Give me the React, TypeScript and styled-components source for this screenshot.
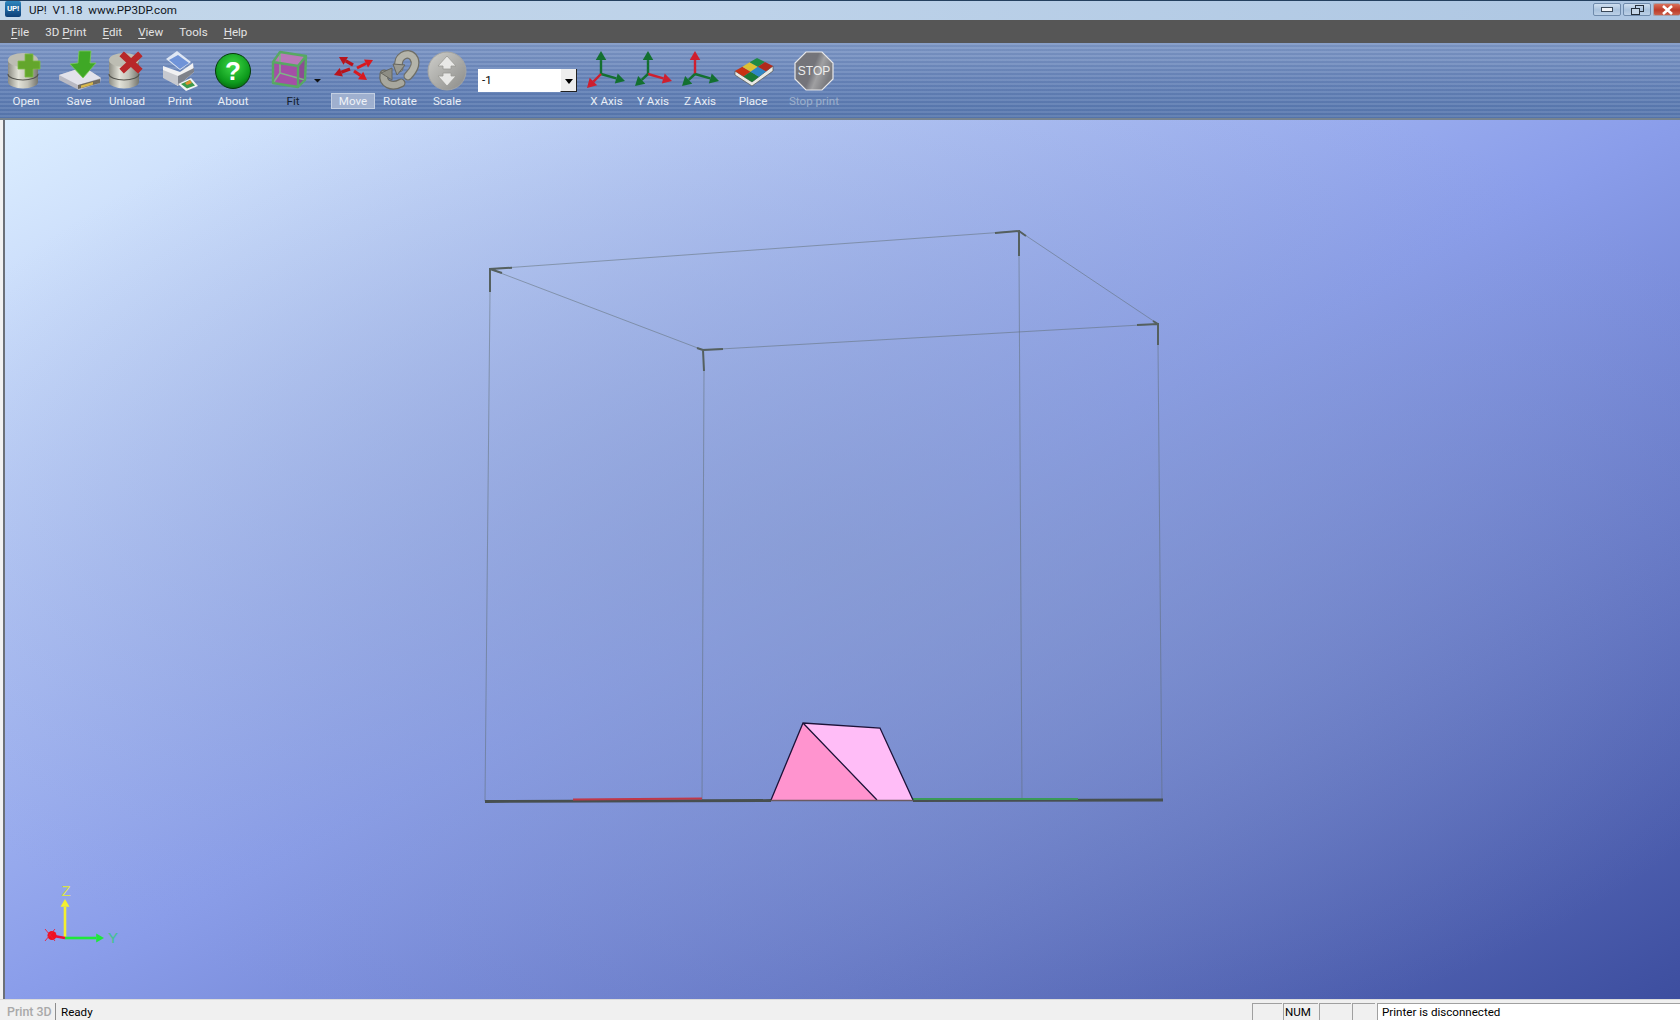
import React from "react";
import styled, { createGlobalStyle } from "styled-components";

const Global = createGlobalStyle`
  html, body { margin: 0; padding: 0; height: 100%; overflow: hidden; background: #f0f0f0; }
  #root { height: 100%; }
`;

const Shell = styled.div`
  display: flex; flex-direction: column; width: 1680px; height: 1020px; overflow: hidden;
  font-family: Roboto, "Liberation Sans", sans-serif; font-size: 11.6px;
`;
const TitleBar = styled.div`
  display: flex; align-items: flex-start; height: 20px; flex: none; box-sizing: border-box;
  border-top: 1px solid #24405f;
  background: linear-gradient(90deg, #c3d7ea 0%, #bdd2e9 45%, #adc6e2 100%);
`;
const AppBadge = styled.div`
  width: 16px; height: 16px; margin: 0 0 0 5px; display: flex; align-items: center; justify-content: center;
  background: linear-gradient(#2f86bd, #0d3f78); border-radius: 2px;
  color: #fff; font-size: 8px; font-weight: 700; line-height: 16px; letter-spacing: -.2px;
`;
const TitleText = styled.div`
  margin-left: 8px; color: #10151c; line-height: 18px; white-space: pre;
`;
const WindowButtons = styled.div`
  margin-left: auto; display: flex; gap: 2px; padding-top: 2px;
`;
const WinBtn = styled.div<{ $w: number; $close?: boolean }>`
  width: ${(p) => p.$w}px; height: 13px; box-sizing: border-box; display: flex; align-items: center; justify-content: center;
  border: 1px solid ${(p) => (p.$close ? "#a8a0a8" : "#6f8bac")}; border-radius: 2px;
  border-right-width: ${(p) => (p.$close ? 0 : 1)}px;
  background: ${(p) =>
    p.$close ? "linear-gradient(#d9705a, #bd3b28 55%, #c9604c)" : "linear-gradient(#cfdff0, #a9c2dd 55%, #bcd0e6)"};
`;
const MenuBar = styled.div`
  display: flex; gap: 16px; height: 23px; flex: none; box-sizing: border-box; padding: 0 0 0 11px;
  align-items: center; background: #565656; color: #e4e4e4;
`;
const MenuItem = styled.span`
  line-height: 20px;
  u { text-underline-offset: 2px; }
`;
const Toolbar = styled.div`
  display: flex; align-items: flex-start; height: 77px; flex: none; box-sizing: border-box; padding-top: 2px;
  border-bottom: 2px solid #76838f;
  background:
    repeating-linear-gradient(180deg, rgba(255,255,255,.08) 0 2px, rgba(20,40,90,.06) 2px 4px),
    linear-gradient(#7f98c6, #6683b8 55%, #5878ae);
`;
const ToolItem = styled.div<{ $w: number }>`
  width: ${(p) => p.$w}px; flex: none; display: flex; flex-direction: column; align-items: center;
`;
const ToolIcon = styled.svg`
  display: block; flex: none; height: 48px;
`;
const ToolLabel = styled.div<{ $tone?: "dark" | "off"; $active?: boolean }>`
  height: 16px; line-height: 17px; white-space: nowrap; box-sizing: border-box; text-align: center;
  color: ${(p) => (p.$tone === "dark" ? "#14202e" : p.$tone === "off" ? "#9db0cc" : "#e8eef6")};
  ${(p) =>
    p.$active
      ? `width: 44px; line-height: 15px; background: #9fb0cf; border: 1px solid #c3cfe2; color: #eef2f8;`
      : ""}
`;
const Combo = styled.div`
  width: 99px; height: 23px; margin: 24px 0 0 10px; flex: none; box-sizing: border-box; display: flex;
  background: #fff; color: #000; line-height: 23px; padding-left: 4px; justify-content: space-between;
`;
const ComboBtn = styled.div`
  width: 17px; height: 23px; box-sizing: border-box; display: flex; align-items: center; justify-content: center;
  background: #ededed; border-left: 1px solid #fff; border-right: 1px solid #222; border-bottom: 1px solid #222;
  &::after { content: ""; margin-top: 3px; border: 4px solid transparent; border-top: 5px solid #000; border-bottom: 0; }
`;
const Main = styled.div`
  flex: 1; display: flex; min-height: 0;
`;
const SideEdge = styled.div`
  width: 5px; flex: none; box-sizing: border-box; background: #f2f2f2; border-right: 2px solid #6b7078;
`;
const Viewport = styled.div`
  flex: 1; min-width: 0;
  background:
    radial-gradient(ellipse 60% 60% at 50% 50%, rgba(135,155,200,.6), rgba(135,155,200,0)),
    linear-gradient(to bottom right, #dceeff 0%, #8a9dea 50%, #3d4e9f 100%);
`;
const Scene = styled.svg`
  display: block; width: 100%; height: 100%;
`;
const StatusBar = styled.div`
  height: 21px; flex: none; display: flex; align-items: flex-end; box-sizing: border-box; background: #f0f0f0;
  color: #000; border-top: 1px solid #dcdcdc;
`;
const StatusTab = styled.div`
  width: 53px; margin-left: 3px; height: 17px; box-sizing: border-box; padding-left: 4px; line-height: 18px; flex: none;
  color: #a9a9a9; font-weight: 500; font-size: 12.4px; border-right: 1px solid #8d8d8d; white-space: nowrap;
`;
const StatusText = styled.div`
  margin-left: 5px; line-height: 18px; height: 17px; flex: 1;
`;
const Pane = styled.div<{ $w: number; $main?: boolean }>`
  width: ${(p) => p.$w}px; height: 17px; flex: none; box-sizing: border-box; margin-left: ${(p) => (p.$main ? 2 : 1)}px;
  border-left: 1px solid #a0a0a0; border-top: 1px solid #a0a0a0; padding-left: ${(p) => (p.$main ? 4 : 1)}px;
  line-height: 17px; white-space: nowrap; background: ${(p) => (p.$main ? "#fff" : "#f0f0f0")};
`;

function Arrow({ x1, y1, x2, y2, c, w = 2, h = 6 }: { x1: number; y1: number; x2: number; y2: number; c: string; w?: number; h?: number }) {
  const a = Math.atan2(y2 - y1, x2 - x1);
  const bx = x2 - Math.cos(a) * h * 1.3;
  const by = y2 - Math.sin(a) * h * 1.3;
  const px = -Math.sin(a) * h * 0.75;
  const py = Math.cos(a) * h * 0.75;
  return (
    <g>
      <line x1={x1} y1={y1} x2={bx} y2={by} stroke={c} strokeWidth={w} />
      <polygon points={`${x2},${y2} ${bx + px},${by + py} ${bx - px},${by - py}`} fill={c} />
    </g>
  );
}

function Cyl({ id, cx }: { id: string; cx: number }) {
  const rx = 15;
  return (
    <g>
      <defs>
        <linearGradient id={id} x1="0" x2="1" y1="0" y2="0">
          <stop offset="0" stopColor="#8d8d84" />
          <stop offset=".35" stopColor="#e2e2d8" />
          <stop offset=".65" stopColor="#c3c3b9" />
          <stop offset="1" stopColor="#76766e" />
        </linearGradient>
      </defs>
      <path d={`M${cx - rx} 60 V82 A${rx} 6.5 0 0 0 ${cx + rx} 82 V60 Z`} fill={`url(#${id})`} />
      <ellipse cx={cx} cy={60} rx={rx} ry={7} fill="#bdbdb3" />
      <path d={`M${cx - rx} 74 A${rx} 6 0 0 0 ${cx + rx} 74`} fill="none" stroke="#55554f" strokeWidth="1.2" />
    </g>
  );
}

const Open = () => (
  <ToolIcon viewBox="2 45 48 48" width="48">
    <Cyl id="c1" cx={23} />
    <path d="M25 54h8v7h7v8h-7v8h-8v-8h-7v-8h7z" fill="#63a62c" stroke="#7dbb48" strokeWidth=".8" />
  </ToolIcon>
);
const Save = () => (
  <ToolIcon viewBox="55 45 48 48" width="48">
    <polygon points="59,75 84,67 101,78 100,83 79,90 59,80" fill="#b9b9c2" />
    <polygon points="59,75 84,67 101,78 78,85" fill="#e2e2ea" />
    <polygon points="78,85 100,79 100,83 78,89" fill="#6f6a60" />
    <polygon points="81,85.5 93,82 93,84.5 81,88" fill="#d8b84c" />
    <polygon points="79,51 91,51 90,63 96,63 83,78 70,64 78,63" fill="#3fa826" stroke="#7ccc58" strokeWidth=".8" />
  </ToolIcon>
);
const Unload = () => (
  <ToolIcon viewBox="103 45 48 48" width="48">
    <Cyl id="c2" cx={124} />
    <path d="M124 56 L138 69 M138 56 L124 69" stroke="#b8282a" strokeWidth="6.5" strokeLinecap="square" fill="none" />
  </ToolIcon>
);
const PrintI = () => (
  <ToolIcon viewBox="156 45 48 48" width="48">
    <polygon points="166,59 177,51 191,62 180,70" fill="#dfe7f4" />
    <polygon points="169,60 178,55 189,63 180,69" fill="#6f93d8" />
    <polygon points="163,66 180,72 193,63 194,72 178,86 163,76" fill="#f1f1f3" />
    <polygon points="163,70 178,76 178,86 163,78" fill="#c7c9cf" />
    <polygon points="178,76 194,68 194,72 178,86" fill="#7f828b" />
    <polygon points="178,84 191,78 198,86 186,91" fill="#f3f3f3" />
    <polygon points="181,84 190,80 195,85.500 187,88.500" fill="#3c9a4c" />
    <polygon points="185,83 190,80 192,83 187,85" fill="#e09030" />
  </ToolIcon>
);
const About = () => (
  <ToolIcon viewBox="209 45 48 48" width="48">
    <defs>
      <radialGradient id="ab" cx=".5" cy=".35" r=".7">
        <stop offset="0" stopColor="#3fd848" />
        <stop offset=".7" stopColor="#0d9a1c" />
        <stop offset="1" stopColor="#04600e" />
      </radialGradient>
    </defs>
    <circle cx="233" cy="71" r="17.500" fill="url(#ab)" stroke="#063a0c" strokeWidth="1" />
    <text x="233" y="80" textAnchor="middle" fontSize="26" fontWeight="700" fontFamily="Liberation Sans, sans-serif" fill="#fff">?</text>
  </ToolIcon>
);
const Fit = () => (
  <ToolIcon viewBox="254 45 78 48" width="78">
    <polygon points="273,62 298,66 298,87 273,83" fill="#a44fa6" />
    <polygon points="273,62 280,52 306,56 298,66" fill="#b978b9" />
    <polygon points="298,66 306,56 305,80 298,87" fill="#8c4c94" />
    <path d="M280 52 V73 L273 83 M280 73 L305 80" fill="none" stroke="#7fb387" strokeWidth="1.6" />
    <path d="M273 62 L298 66 L298 87 L273 83 Z M273 62 L280 52 L306 56 L298 66 M306 56 L305 80 L298 87" fill="none" stroke="#57a863" strokeWidth="2.400" strokeLinejoin="round" />
    <polygon points="314,79 321,79 317.500,82.500" fill="#101010" />
  </ToolIcon>
);
const Move = () => (
  <ToolIcon viewBox="329 45 48 48" width="48">
    <Arrow x1={353} y1={65} x2={339} y2={57} c="#b8141c" w={3.400} h={6} />
    <Arrow x1={350} y1={69} x2={334} y2={75} c="#b8141c" w={3.400} h={6} />
    <Arrow x1={357} y1={68} x2={373} y2={60} c="#d9191f" w={3} h={6} />
    <Arrow x1={354} y1={71} x2={367} y2={80} c="#d9191f" w={3} h={6} />
  </ToolIcon>
);
const Rotate = () => (
  <ToolIcon viewBox="376 45 48 48" width="48">
    <g fill="none" strokeLinecap="round">
      <path d="M384 74 C382 84 392 88 401 83" stroke="#6a6a63" strokeWidth="9" />
      <path d="M384 74 C382 84 392 88 401 83" stroke="#a8a89e" strokeWidth="6.500" />
      <path d="M399 68 C396 56 408 51 413 57 C417 62 415 69 408 76" stroke="#6f6f68" strokeWidth="9" />
      <path d="M399 68 C396 56 408 51 413 57 C417 62 415 69 408 76" stroke="#b4b4aa" strokeWidth="6.500" />
    </g>
    <polygon points="381,73 392,68 392,80" fill="#8d8d84" stroke="#66665f" />
    <polygon points="393,64 405,65 397,75" fill="#9a9a91" stroke="#66665f" />
  </ToolIcon>
);
const Scale = () => (
  <ToolIcon viewBox="423 45 48 48" width="48">
    <defs>
      <linearGradient id="sc" x1="0" x2="1" y1="0" y2="1">
        <stop offset="0" stopColor="#cfcfcb" />
        <stop offset="1" stopColor="#8b8b88" />
      </linearGradient>
    </defs>
    <circle cx="447" cy="71" r="19" fill="url(#sc)" stroke="#a5a5a2" strokeWidth="1" />
    <path d="M447 56 L456 66 H451 V69 H443 V66 H438 Z M443 73 H451 V76 H456 L447 86 L438 76 H443 Z" fill="#e8e8e6" stroke="#9a9a96" strokeWidth=".8" />
  </ToolIcon>
);
const G = "#137030";
const R = "#cf1f2e";
const Axes = ({ x0, ox, a, b, c, hl }: { x0: number; ox: number; a: number[]; b: number[]; c: number[]; hl: number }) => (
  <ToolIcon viewBox={`${x0} 45 48 48`} width="48">
    <Arrow x1={ox} y1={74} x2={a[0]} y2={a[1]} c={hl === 0 ? R : G} w={2.400} h={7} />
    <Arrow x1={ox} y1={74} x2={b[0]} y2={b[1]} c={hl === 1 ? R : G} w={2.400} h={7} />
    <Arrow x1={ox} y1={74} x2={c[0]} y2={c[1]} c={hl === 2 ? R : G} w={2.400} h={7} />
  </ToolIcon>
);
const Place = () => {
  const cells = [
    ["#c83212", "#dcc034", "#1f8a44"],
    ["#1c7a34", "#2f86c4", "#b02a1c"],
  ];
  const L = [735, 71], T = [757, 58], Rr = [773, 66], B = [752, 82];
  const pt = (u: number, v: number) => {
    const x = L[0] + (T[0] - L[0]) * u + (B[0] - L[0]) * v + (L[0] + Rr[0] - T[0] - B[0]) * u * v;
    const y = L[1] + (T[1] - L[1]) * u + (B[1] - L[1]) * v + (L[1] + Rr[1] - T[1] - B[1]) * u * v;
    return `${x},${y}`;
  };
  return (
    <ToolIcon viewBox="729 45 48 48" width="48">
      <polygon points="735,71 735,75 752,86 773,71 773,66 752,82" fill="#e9e9e4" stroke="#55554f" strokeWidth=".7" />
      {cells.map((row, v) =>
        row.map((col, u) => (
          <polygon
            key={`${u}${v}`}
            fill={col}
            points={`${pt(u / 3, v / 2)} ${pt((u + 1) / 3, v / 2)} ${pt((u + 1) / 3, (v + 1) / 2)} ${pt(u / 3, (v + 1) / 2)}`}
          />
        )),
      )}
    </ToolIcon>
  );
};
const Stop = () => (
  <ToolIcon viewBox="790 45 48 48" width="48">
    <defs>
      <linearGradient id="st" x1="0" x2="1" y1="0" y2=".4">
        <stop offset="0" stopColor="#75757a" />
        <stop offset=".55" stopColor="#74747a" />
        <stop offset=".72" stopColor="#a0a0a2" />
        <stop offset="1" stopColor="#7a7a7e" />
      </linearGradient>
    </defs>
    <polygon points="806,52 822,52 833,63 833,79 822,90 806,90 795,79 795,63" fill="url(#st)" stroke="#e8e8ea" strokeWidth="1.2" />
    <text x="814" y="75" textAnchor="middle" fontSize="12" fontFamily="Liberation Sans, sans-serif" fill="#eee">STOP</text>
  </ToolIcon>
);

const Tick = ({ d }: { d: string }) => <path d={d} fill="none" stroke="#55605f" strokeWidth="2" />;
const Wire = ({ d }: { d: string }) => <path d={d} fill="none" stroke="#5d6b70" strokeOpacity=".5" strokeWidth="1" />;

export default function App() {
  return (
    <Shell>
      <Global />
      <TitleBar>
        <AppBadge>UP!</AppBadge>
        <TitleText>{"UP!  V1.18  www.PP3DP.com"}</TitleText>
        <WindowButtons>
          <WinBtn $w={28}>
            <svg width="12" height="5" viewBox="0 0 12 5"><rect x=".5" y=".5" width="11" height="4" fill="#f2f5f9" stroke="#3c4a5a" /></svg>
          </WinBtn>
          <WinBtn $w={28}>
            <svg width="13" height="10" viewBox="0 0 13 10">
              <rect x="4.500" y=".5" width="8" height="6" fill="none" stroke="#26303c" />
              <rect x=".5" y="3.500" width="8" height="6" fill="#c5d6e8" stroke="#26303c" />
            </svg>
          </WinBtn>
          <WinBtn $w={27} $close>
            <svg width="13" height="10" viewBox="0 0 13 10"><path d="M2 1 L11 9 M11 1 L2 9" stroke="#fff" strokeWidth="2.600" /></svg>
          </WinBtn>
        </WindowButtons>
      </TitleBar>
      <MenuBar>
        <MenuItem><u>F</u>ile</MenuItem>
        <MenuItem>3D <u>P</u>rint</MenuItem>
        <MenuItem><u>E</u>dit</MenuItem>
        <MenuItem><u>V</u>iew</MenuItem>
        <MenuItem>Tools</MenuItem>
        <MenuItem><u>H</u>elp</MenuItem>
      </MenuBar>
      <Toolbar>
        <ToolItem $w={52}><Open /><ToolLabel>Open</ToolLabel></ToolItem>
        <ToolItem $w={54}><Save /><ToolLabel>Save</ToolLabel></ToolItem>
        <ToolItem $w={42}><Unload /><ToolLabel>Unload</ToolLabel></ToolItem>
        <ToolItem $w={64}><PrintI /><ToolLabel>Print</ToolLabel></ToolItem>
        <ToolItem $w={42}><About /><ToolLabel>About</ToolLabel></ToolItem>
        <ToolItem $w={78}><Fit /><ToolLabel $tone="dark">Fit</ToolLabel></ToolItem>
        <ToolItem $w={42}><Move /><ToolLabel $active>Move</ToolLabel></ToolItem>
        <ToolItem $w={52}><Rotate /><ToolLabel>Rotate</ToolLabel></ToolItem>
        <ToolItem $w={42}><Scale /><ToolLabel>Scale</ToolLabel></ToolItem>
        <Combo>-1<ComboBtn /></Combo>
        <ToolItem $w={59}>
          <Axes x0={582} ox={600} a={[600, 51]} b={[624, 81]} c={[586, 88]} hl={2} />
          <ToolLabel>X Axis</ToolLabel>
        </ToolItem>
        <ToolItem $w={34}>
          <Axes x0={629} ox={648} a={[648, 51]} b={[672, 81]} c={[635, 86]} hl={1} />
          <ToolLabel>Y Axis</ToolLabel>
        </ToolItem>
        <ToolItem $w={60}>
          <Axes x0={676} ox={695} a={[695, 51]} b={[719, 81]} c={[682, 86]} hl={0} />
          <ToolLabel>Z Axis</ToolLabel>
        </ToolItem>
        <ToolItem $w={46}><Place /><ToolLabel>Place</ToolLabel></ToolItem>
        <ToolItem $w={76}><Stop /><ToolLabel $tone="off">Stop print</ToolLabel></ToolItem>
      </Toolbar>
      <Main>
        <SideEdge />
        <Viewport>
          <Scene viewBox="5 120 1675 879" preserveAspectRatio="none">
            <Wire d="M490 269 L1019 231 L1158 324 L703 350 Z" />
            <Wire d="M490 292 L485 801 M704 371 L702 801 M1019 256 L1022 801 M1158 345 L1162 801" />
            <Tick d="M512 267.700 L490 269 L490 292 M490 269 L502 273" />
            <Tick d="M723 349 L703 350 L704 371 M703 350 L697 348" />
            <Tick d="M995 233 L1019 231 L1019 256 M1019 231 L1026 236" />
            <Tick d="M1137 325 L1158 324 L1158 345 M1158 324 L1153 321" />
            <path d="M485 801.500 L771 800.500 M913 800.500 L1163 800" stroke="#474f4f" strokeWidth="2.800" fill="none" />
            <path d="M573 799.500 L702 798.500" stroke="#c03848" strokeWidth="1.800" fill="none" />
            <path d="M913 799 L1078 799" stroke="#3b9a58" strokeWidth="1.800" fill="none" />
            <polygon points="771,800 803,723 877,800" fill="#ff94cf" />
            <polygon points="803,723 880,728 913,800 877,800" fill="#ffbdf7" />
            <path d="M771 800 L803 723 L880 728 L913 800 M803 723 L877 800" fill="none" stroke="#1c1238" strokeWidth="1.300" />
            <path d="M771 800.500 L913 800.500" stroke="#6a5a62" strokeWidth="1.500" />
            <g>
              <Arrow x1={65} y1={938} x2={65} y2={899} c="#f4f02e" w={2.600} h={6} />
              <Arrow x1={65} y1={938} x2={104} y2={938} c="#1fe83a" w={2.600} h={6} />
              <line x1={65} y1={938} x2={54} y2={936} stroke="#e8103c" strokeWidth="2.400" />
              <circle cx="52" cy="935.500" r="4.500" fill="#f01020" />
              <path d="M45 929 L55 941 M55 929 L45 941" stroke="#e8203c" strokeWidth=".9" />
              <text x="66" y="896" textAnchor="middle" fontSize="15" fontFamily="Liberation Sans, sans-serif" fill="#d8e050">Z</text>
              <text x="113" y="943" textAnchor="middle" fontSize="15" fontFamily="Liberation Sans, sans-serif" fill="#3fc48a">Y</text>
            </g>
          </Scene>
        </Viewport>
      </Main>
      <StatusBar>
        <StatusTab>Print 3D</StatusTab>
        <StatusText>Ready</StatusText>
        <Pane $w={30} />
        <Pane $w={35}>NUM</Pane>
        <Pane $w={32} />
        <Pane $w={23} />
        <Pane $w={303} $main>Printer is disconnected</Pane>
      </StatusBar>
    </Shell>
  );
}
